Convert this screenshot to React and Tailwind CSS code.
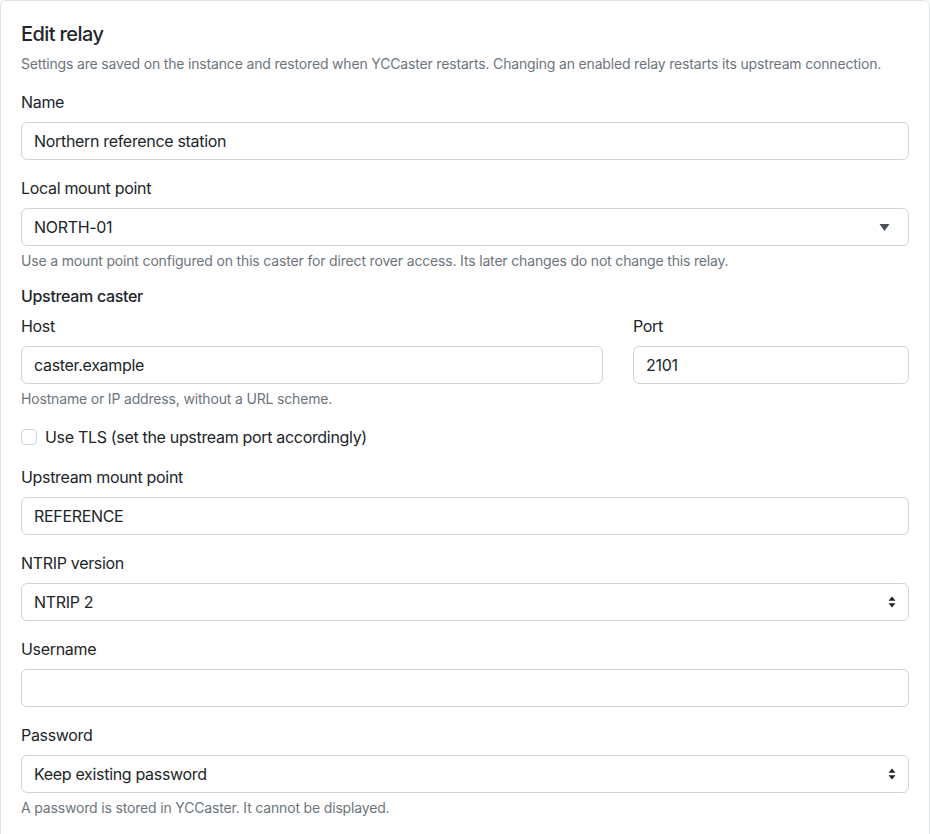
import React, { useState } from "react";

const font = { fontFamily: "Inter, 'Liberation Sans', sans-serif" };

function Label({ children, htmlFor }) {
  return (
    <label htmlFor={htmlFor} className="block mb-2 text-base leading-6 tracking-[-0.02em] text-[#212529]">
      {children}
    </label>
  );
}

function Help({ children }) {
  return <p className="mt-[5px] text-sm leading-5 tracking-[-0.012em] text-[#6c757d]">{children}</p>;
}

const inputCls =
  "block w-full h-[38px] px-3 rounded-md border border-[#ced4da] bg-white text-base tracking-[-0.02em] text-[#212529] focus:outline-none";

function TextInput({ id, value, onChange }) {
  return <input id={id} type="text" value={value} onChange={(e) => onChange(e.target.value)} className={inputCls} />;
}

function CaretDown() {
  return (
    <svg width="11" height="9" viewBox="0 0 11 9" className="pointer-events-none absolute right-[19px] top-1/2 -translate-y-1/2">
      <path d="M0.5 1.5 L10.5 1.5 L5.5 8.5 Z" fill="#495057" />
    </svg>
  );
}

function UpDown() {
  return (
    <svg width="8" height="12" viewBox="0 0 8 12" className="pointer-events-none absolute right-[13px] top-1/2 -translate-y-1/2">
      <path d="M4 0.5 L7.5 4.8 L0.5 4.8 Z M4 11.5 L7.5 7.2 L0.5 7.2 Z" fill="#212529" />
    </svg>
  );
}

function Select({ id, value, onChange, options, arrow = "updown" }) {
  return (
    <div className="relative">
      <select
        id={id}
        value={value}
        onChange={(e) => onChange(e.target.value)}
        className={inputCls + " appearance-none pr-10"}
      >
        {options.map((o) => (
          <option key={o}>{o}</option>
        ))}
      </select>
      {arrow === "caret" ? <CaretDown /> : <UpDown />}
    </div>
  );
}

export default function App() {
  const [name, setName] = useState("Northern reference station");
  const [mount, setMount] = useState("NORTH-01");
  const [host, setHost] = useState("caster.example");
  const [port, setPort] = useState("2101");
  const [tls, setTls] = useState(false);
  const [upMount, setUpMount] = useState("REFERENCE");
  const [version, setVersion] = useState("NTRIP 2");
  const [user, setUser] = useState("");
  const [pw, setPw] = useState("Keep existing password");

  return (
    <div className="min-h-screen bg-white" style={font}>
      <div className="w-[930px] min-h-[860px] rounded-tl-md rounded-tr-md border border-[#dee2e6] px-5 pt-[21px] pb-6">
        <h1 className="text-xl leading-6 font-medium tracking-[-0.03em] text-[#212529]">Edit relay</h1>
        <p className="mt-2 text-sm leading-5 tracking-[-0.012em] text-[#6c757d]">
          Settings are saved on the instance and restored when YCCaster restarts. Changing an enabled relay restarts its upstream connection.
        </p>

        <div className="mt-4 mb-4">
          <Label htmlFor="name">Name</Label>
          <TextInput id="name" value={name} onChange={setName} />
        </div>

        <div className="mb-[13px]">
          <Label htmlFor="mount">Local mount point</Label>
          <Select id="mount" value={mount} onChange={setMount} options={["NORTH-01", "SOUTH-02"]} arrow="caret" />
          <Help>Use a mount point configured on this caster for direct rover access. Its later changes do not change this relay.</Help>
        </div>

        <div className="mb-4">
          <div className="text-base leading-6 font-medium tracking-[-0.02em] text-[#212529] mb-1.5">Upstream caster</div>
          <div className="grid grid-cols-[1fr_276px] gap-x-[30px]">
            <div>
              <Label htmlFor="host">Host</Label>
              <TextInput id="host" value={host} onChange={setHost} />
            </div>
            <div>
              <Label htmlFor="port">Port</Label>
              <TextInput id="port" value={port} onChange={setPort} />
            </div>
          </div>
          <Help>Hostname or IP address, without a URL scheme.</Help>
        </div>

        <label className="mb-4 flex items-center gap-2 text-base leading-6 tracking-[-0.02em] text-[#212529]">
          <input
            type="checkbox"
            checked={tls}
            onChange={(e) => setTls(e.target.checked)}
            className="h-4 w-4 appearance-none rounded border border-[#ced4da] bg-white checked:bg-[#0d6efd]"
          />
          Use TLS (set the upstream port accordingly)
        </label>

        <div className="mb-4">
          <Label htmlFor="upmount">Upstream mount point</Label>
          <TextInput id="upmount" value={upMount} onChange={setUpMount} />
        </div>

        <div className="mb-4">
          <Label htmlFor="ver">NTRIP version</Label>
          <Select id="ver" value={version} onChange={setVersion} options={["NTRIP 1", "NTRIP 2"]} />
        </div>

        <div className="mb-4">
          <Label htmlFor="user">Username</Label>
          <TextInput id="user" value={user} onChange={setUser} />
        </div>

        <div>
          <Label htmlFor="pw">Password</Label>
          <Select id="pw" value={pw} onChange={setPw} options={["Keep existing password", "Set new password", "Remove password"]} />
          <Help>A password is stored in YCCaster. It cannot be displayed.</Help>
        </div>
      </div>
    </div>
  );
}
